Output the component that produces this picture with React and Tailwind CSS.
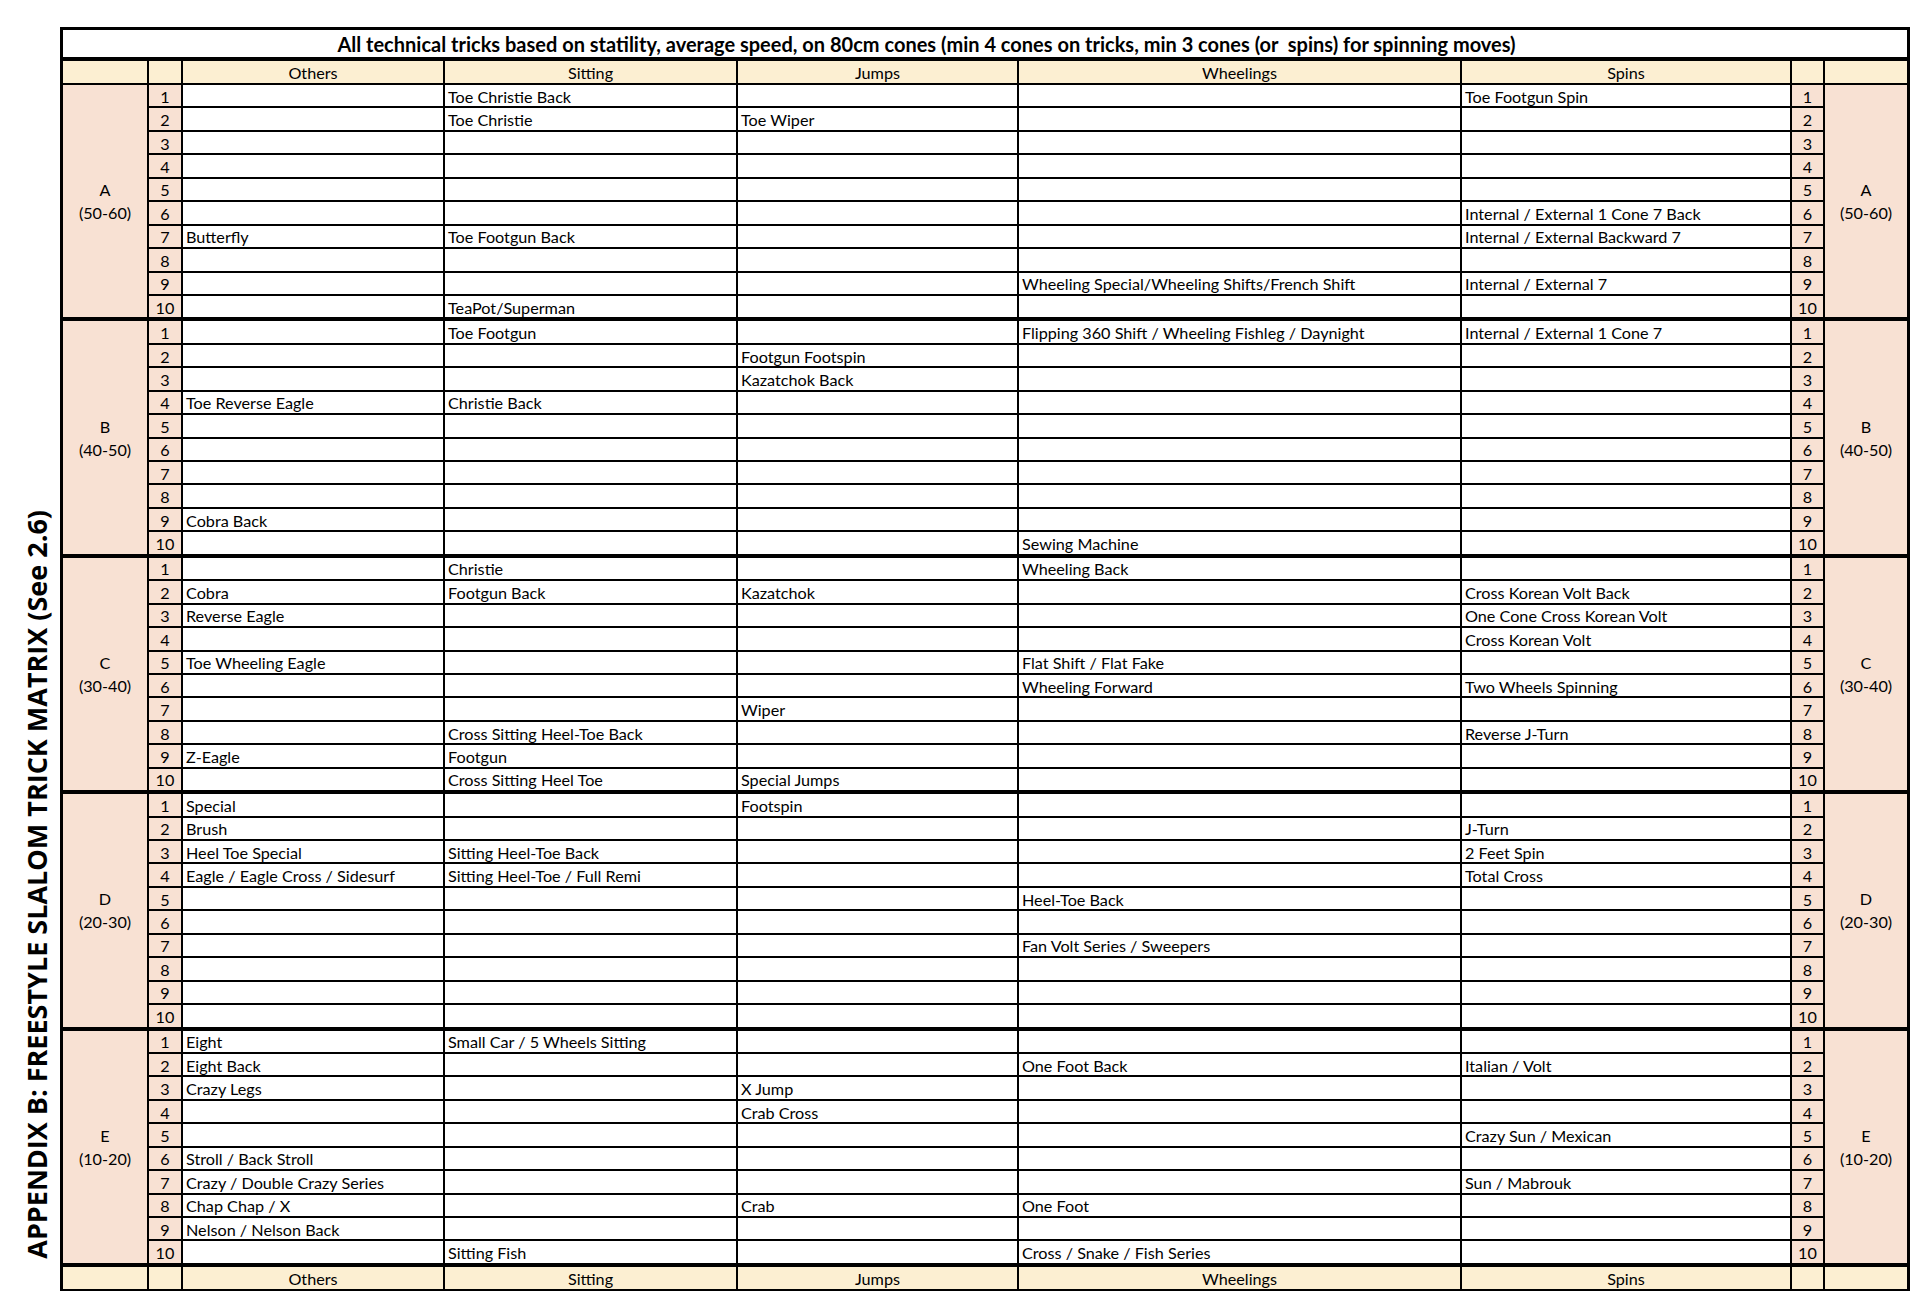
const LEVELS = [
  {
    letter: "A",
    range: "(50-60)",
    rows: [
      ["", "Toe Christie Back", "", "", "Toe Footgun Spin"],
      ["", "Toe Christie", "Toe Wiper", "", ""],
      ["", "", "", "", ""],
      ["", "", "", "", ""],
      ["", "", "", "", ""],
      ["", "", "", "", "Internal / External 1 Cone 7 Back"],
      ["Butterfly", "Toe Footgun Back", "", "", "Internal / External Backward 7"],
      ["", "", "", "", ""],
      ["", "", "", "Wheeling Special/Wheeling Shifts/French Shift", "Internal / External 7"],
      ["", "TeaPot/Superman", "", "", ""],
    ],
  },
  {
    letter: "B",
    range: "(40-50)",
    rows: [
      ["", "Toe Footgun", "", "Flipping 360 Shift / Wheeling Fishleg / Daynight", "Internal / External 1 Cone 7"],
      ["", "", "Footgun Footspin", "", ""],
      ["", "", "Kazatchok Back", "", ""],
      ["Toe Reverse Eagle", "Christie Back", "", "", ""],
      ["", "", "", "", ""],
      ["", "", "", "", ""],
      ["", "", "", "", ""],
      ["", "", "", "", ""],
      ["Cobra Back", "", "", "", ""],
      ["", "", "", "Sewing Machine", ""],
    ],
  },
  {
    letter: "C",
    range: "(30-40)",
    rows: [
      ["", "Christie", "", "Wheeling Back", ""],
      ["Cobra", "Footgun Back", "Kazatchok", "", "Cross Korean Volt Back"],
      ["Reverse Eagle", "", "", "", "One Cone Cross Korean Volt"],
      ["", "", "", "", "Cross Korean Volt"],
      ["Toe Wheeling Eagle", "", "", "Flat Shift / Flat Fake", ""],
      ["", "", "", "Wheeling Forward", "Two Wheels Spinning"],
      ["", "", "Wiper", "", ""],
      ["", "Cross Sitting Heel-Toe Back", "", "", "Reverse J-Turn"],
      ["Z-Eagle", "Footgun", "", "", ""],
      ["", "Cross Sitting Heel Toe", "Special Jumps", "", ""],
    ],
  },
  {
    letter: "D",
    range: "(20-30)",
    rows: [
      ["Special", "", "Footspin", "", ""],
      ["Brush", "", "", "", "J-Turn"],
      ["Heel Toe Special", "Sitting Heel-Toe Back", "", "", "2 Feet Spin"],
      ["Eagle / Eagle Cross / Sidesurf", "Sitting Heel-Toe / Full Remi", "", "", "Total Cross"],
      ["", "", "", "Heel-Toe Back", ""],
      ["", "", "", "", ""],
      ["", "", "", "Fan Volt Series / Sweepers", ""],
      ["", "", "", "", ""],
      ["", "", "", "", ""],
      ["", "", "", "", ""],
    ],
  },
  {
    letter: "E",
    range: "(10-20)",
    rows: [
      ["Eight", "Small Car / 5 Wheels Sitting", "", "", ""],
      ["Eight Back", "", "", "One Foot Back", "Italian / Volt"],
      ["Crazy Legs", "", "X Jump", "", ""],
      ["", "", "Crab Cross", "", ""],
      ["", "", "", "", "Crazy Sun / Mexican"],
      ["Stroll / Back Stroll", "", "", "", ""],
      ["Crazy / Double Crazy Series", "", "", "", "Sun / Mabrouk"],
      ["Chap Chap / X", "", "Crab", "One Foot", ""],
      ["Nelson / Nelson Back", "", "", "", ""],
      ["", "Sitting Fish", "", "Cross / Snake / Fish Series", ""],
    ],
  },
];

const HEADINGS = ["Others", "Sitting", "Jumps", "Wheelings", "Spins"];

const COLS = "grid-cols-[84px_32px_260px_291px_279px_441px_328px_31px_82px]";

const HeaderRow = ({ className }) => (
  <div className={`grid ${COLS} gap-x-[2px] bg-black ${className}`}>
    <div className="bg-[#fcefd2]" />
    <div className="bg-[#fcefd2]" />
    {HEADINGS.map((h) => (
      <div key={h} className="bg-[#fcefd2] flex items-center justify-center pt-px">
        {h}
      </div>
    ))}
    <div className="bg-[#fcefd2]" />
    <div className="bg-[#fcefd2]" />
  </div>
);

const Level = ({ level }) => (
  <div className={`grid ${COLS} grid-rows-[repeat(10,21.44px)] gap-[2px] bg-black`}>
    <div className="col-start-1 row-start-1 row-end-11 bg-[#f8e1d3] flex flex-col items-center justify-center leading-[23px]">
      <span>{level.letter}</span>
      <span>{level.range}</span>
    </div>
    <div className="col-start-9 row-start-1 row-end-11 bg-[#f8e1d3] flex flex-col items-center justify-center leading-[23px]">
      <span>{level.letter}</span>
      <span>{level.range}</span>
    </div>
    {level.rows.map((row, i) => (
      <div key={i} className="contents">
        <div className="bg-[#f8e1d3] flex items-center justify-center pt-px">{i + 1}</div>
        {row.map((cell, j) => (
          <div key={j} className="bg-white flex items-center pl-[3px] pt-px whitespace-nowrap overflow-hidden">
            {cell}
          </div>
        ))}
        <div className="bg-[#f8e1d3] flex items-center justify-center pt-px">{i + 1}</div>
      </div>
    ))}
  </div>
);

export default function App() {
  return (
    <div className="flex pt-[27px] bg-white min-h-screen">
      <div className="w-[60px] flex flex-col justify-end items-center pb-[43px] pl-[13px]">
        <div className="[writing-mode:vertical-rl] rotate-180 font-['Open_Sans',sans-serif] font-bold text-[27px] leading-none whitespace-nowrap text-black">
          APPENDIX B: FREESTYLE SLALOM TRICK MATRIX (See 2.6)
        </div>
      </div>

      <div className="w-[1850px] self-start border-[3px] border-black font-['Lato',sans-serif] text-[16.2px] text-black leading-[21px]">
        <div className="h-[31px] flex items-center justify-center pr-[117px] pt-px border-b-4 border-black font-bold text-[20px]">
          All technical tricks based on statility, average speed, on 80cm cones (min 4 cones on tricks, min 3 cones (or&nbsp; spins) for spinning moves)
        </div>
        <HeaderRow className="h-[24px] border-b-2 border-black" />
        <div className="flex flex-col gap-[4px] bg-black">
          {LEVELS.map((level) => (
            <Level key={level.letter} level={level} />
          ))}
        </div>
        <HeaderRow className="h-[25px] border-t-4 border-black" />
      </div>
    </div>
  );
}
